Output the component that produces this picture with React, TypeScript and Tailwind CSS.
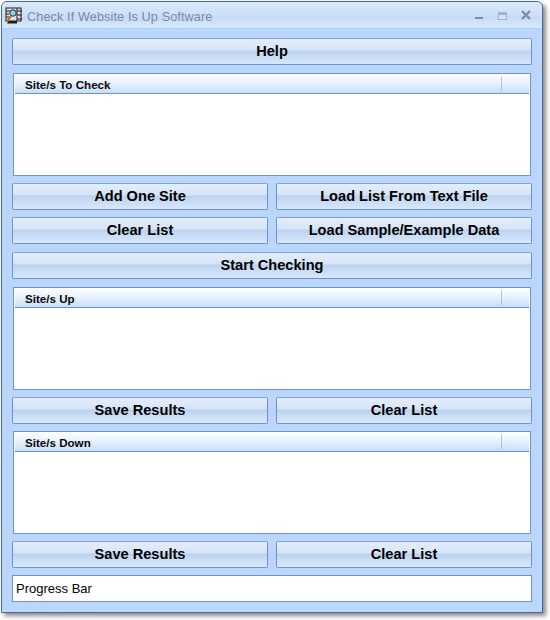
const font = "[font-family:'Liberation_Sans',Arial,sans-serif]";

function Btn({ label, className = '' }: { label: string; className?: string }) {
  return (
    <button
      className={`${font} h-[27px] rounded-[2px] border border-[#6f93c8] border-t-[#7fa1d4] bg-[linear-gradient(to_bottom,#e4eefb_0%,#d6e4f7_42%,#bcd2ee_50%,#c4d9f3_62%,#d6e8fd_100%)] pb-[2px] text-[14.6px] leading-[22px] font-bold text-black ${className}`}
    >
      {label}
    </button>
  );
}

function ListBox({ title }: { title: string }) {
  return (
    <div className="mx-px flex h-[103px] flex-col border border-[#6d94cc] bg-white">
      <div className="mr-px ml-px flex h-[20px] shrink-0 items-center border-b border-[#6d94cc] bg-[linear-gradient(to_bottom,#ffffff_0%,#eef5fe_35%,#c9def8_100%)]">
        <div className={`${font} w-[486px] pt-[2px] pl-[10px] text-[11.6px] leading-[16px] font-bold text-[#0a0a0a]`}>
          {title}
        </div>
        <div className="h-[14px] w-px bg-[#a9c4ea]" />
      </div>
    </div>
  );
}

function TitleIcon() {
  return (
    <svg width="18" height="18" viewBox="0 0 18 18" className="mt-[2px] shrink-0">
      <rect x="1" y="1" width="15" height="13" fill="#dfe3e6" stroke="#1c1c1c" strokeWidth="1" />
      <path d="M1 4h4M1 7h3M1 10h3M12 1v13M12 4h5M12 8h5M12 12h5" stroke="#1c1c1c" strokeWidth="1" fill="none" />
      <circle cx="8" cy="6" r="3.2" fill="#8fd0f2" stroke="#2a2a2a" strokeWidth="1" />
      <path d="M6 9L1.5 15" stroke="#c8641e" strokeWidth="2" />
      <path d="M4 14h8v2.5H2z" fill="#1c1c1c" />
    </svg>
  );
}

export default function App() {
  return (
    <div className="h-[620px] w-[550px] bg-white pt-px pl-px">
      <div className="flex h-[612px] w-[542px] flex-col rounded-t-[6px] border border-[#46699b] bg-[#bad6fd] shadow-[3px_3px_4px_rgba(60,60,60,0.6)]">
        <div className="flex h-[27px] shrink-0 items-center rounded-t-[5px] border-b border-[#a9cdfb] bg-[linear-gradient(to_bottom,#d9e8fb_0%,#cfe1f8_45%,#c5dbf6_60%,#d8e9fd_100%)] pl-[3px]">
          <TitleIcon />
          <span className={`${font} mt-[5px] ml-[4px] text-[12.7px] tracking-[0.1px] text-[#7d8a9b]`}>
            Check If Website Is Up Software
          </span>
          <div className="ml-auto flex items-center">
            <svg width="80" height="16" viewBox="0 0 80 16">
              <rect x="13" y="10" width="8" height="2" fill="#7f8c9d" />
              <rect x="36.5" y="5.5" width="8" height="7" fill="#d5e2f3" stroke="#a4b5c9" />
              <rect x="36" y="6" width="9" height="2" fill="#a4b5c9" />
              <path d="M60 4l8 8M68 4l-8 8" stroke="#7f8c9d" strokeWidth="2.4" />
            </svg>
          </div>
        </div>
        <div className="flex flex-1 flex-col px-[10px] pt-[9px]">
          <Btn label="Help" className="w-full" />
          <div className="mt-[8px]">
            <ListBox title="Site/s To Check" />
          </div>
          <div className="mt-[7px] grid grid-cols-2 gap-x-[8px]">
            <Btn label="Add One Site" />
            <Btn label="Load List From Text File" />
          </div>
          <div className="mt-[7px] grid grid-cols-2 gap-x-[8px]">
            <Btn label="Clear List" />
            <Btn label="Load Sample/Example Data" />
          </div>
          <Btn label="Start Checking" className="mt-[8px] w-full" />
          <div className="mt-[8px]">
            <ListBox title="Site/s Up" />
          </div>
          <div className="mt-[7px] grid grid-cols-2 gap-x-[8px]">
            <Btn label="Save Results" />
            <Btn label="Clear List" />
          </div>
          <div className="mt-[7px]">
            <ListBox title="Site/s Down" />
          </div>
          <div className="mt-[7px] grid grid-cols-2 gap-x-[8px]">
            <Btn label="Save Results" />
            <Btn label="Clear List" />
          </div>
          <div className={`${font} mt-[7px] h-[27px] border border-[#6d94cc] bg-white pl-[3px] text-[13px] leading-[25px] text-black`}>
            Progress Bar
          </div>
        </div>
      </div>
    </div>
  );
}
